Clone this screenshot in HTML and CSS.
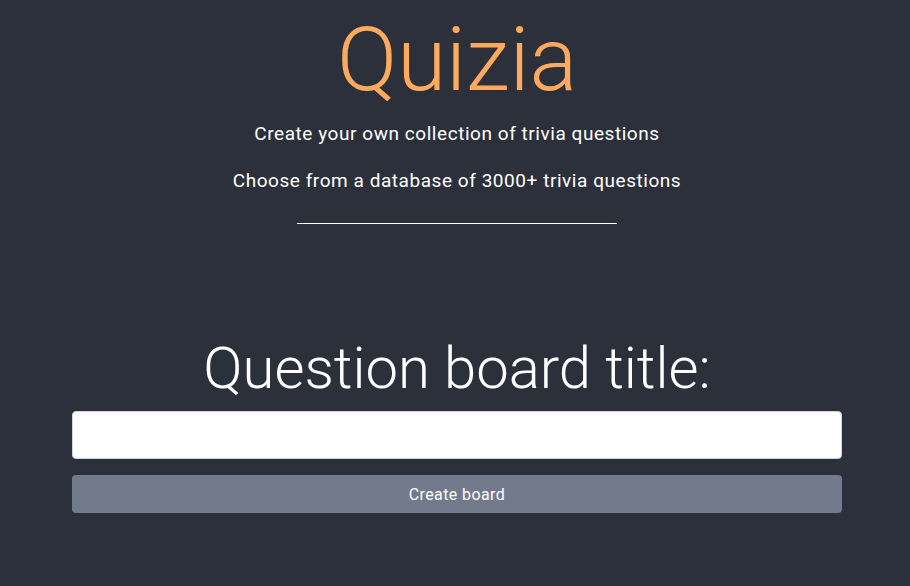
FILE: index.html
```html
<!DOCTYPE html>
<html lang="en">
<head>
<meta charset="utf-8">
<title>Quizia</title>
<link rel="stylesheet" href="styles.css">
</head>
<body>
<header class="hero">
  <h1 class="brand">Quizia</h1>
  <p class="tagline">Create your own collection of trivia questions</p>
  <p class="tagline">Choose from a database of 3000+ trivia questions</p>
  <hr class="divider">
</header>
<main class="board-form">
  <h2 class="board-title">Question board title:</h2>
  <input class="board-input" type="text">
  <button class="board-button" type="button">Create board</button>
</main>
</body>
</html>
```
FILE: styles.css
```css
html, body {
  margin: 0;
  padding: 0;
  background: #2c303b;
  height: 100%;
}
body {
  font-family: Roboto, "Noto Sans", sans-serif;
  color: #ffffff;
}
.hero {
  display: flex;
  flex-direction: column;
  align-items: center;
  padding: 8px 0 0 4px;
}
.brand {
  margin: 0;
  font-size: 89px;
  font-weight: 300;
  line-height: 104px;
  color: #fdaa5f;
}
.tagline {
  margin: 10px 0 0;
  font-size: 19px;
  line-height: 24px;
  font-weight: 400;
  letter-spacing: 0.55px;
}
.tagline + .tagline {
  margin-top: 23px;
}
.divider {
  width: 320px;
  margin: 30px 0 0;
  border: 0;
  border-top: 1px solid #ffffff;
}
.board-form {
  display: flex;
  flex-direction: column;
  width: 770px;
  margin: 110px 0 0 72px;
}
.board-title {
  margin: 0;
  text-align: center;
  font-size: 58px;
  font-weight: 300;
  line-height: 68px;
}
.board-input {
  margin-top: 9px;
  height: 48px;
  box-sizing: border-box;
  border: 1px solid #ced4da;
  border-radius: 4px;
  background: #ffffff;
  font-size: 16px;
}
.board-button {
  margin-top: 16px;
  height: 38px;
  border: 0;
  border-radius: 4px;
  background: #737a8b;
  color: #ffffff;
  font-family: Roboto, "Noto Sans", sans-serif;
  font-size: 16px;
  letter-spacing: 0.4px;
}
```
